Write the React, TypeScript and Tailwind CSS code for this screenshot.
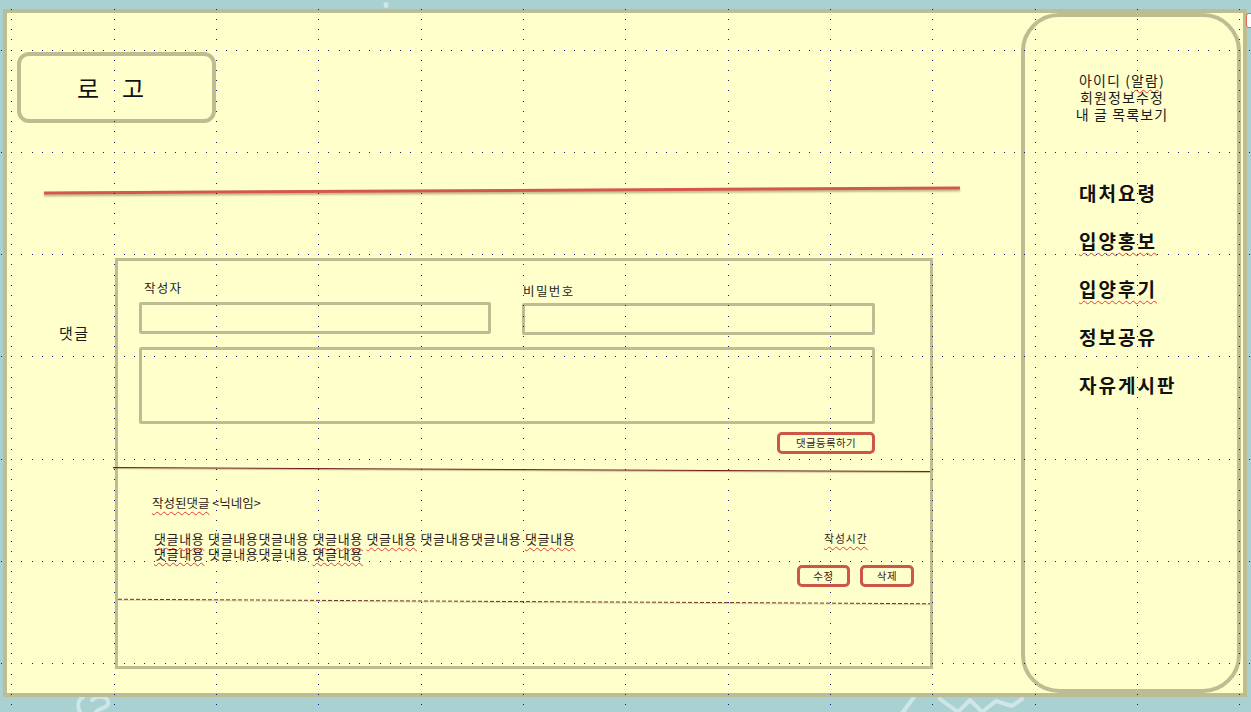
import React from "react";

function Grid() {
  const S = 102.33;
  const d = 10.233;
  const rects: React.ReactElement[] = [];
  for (let i = 0; i < 13; i++) {
    const x = Math.floor(11.7 + i * S);
    for (let j = -5; j < 66; j++) {
      const y = Math.floor(50 + j * d);
      if (y < 0 || y > 711) continue;
      rects.push(<rect key={`v${i}_${j}`} x={x} y={y} width={1} height={1} />);
    }
  }
  for (let i = 0; i < 7; i++) {
    const y = Math.floor(50 + i * S);
    for (let j = -2; j < 124; j++) {
      const x = Math.floor(11.7 + j * d);
      if (x < 0 || x > 1250) continue;
      if (j % 10 === 0) continue;
      rects.push(<rect key={`h${i}_${j}`} x={x} y={y} width={1} height={1} />);
    }
  }
  return (
    <svg
      className="absolute left-0 top-0 pointer-events-none"
      width={1251}
      height={712}
      fill="#15156b"
      shapeRendering="crispEdges"
    >
      {rects}
    </svg>
  );
}

function Squig({ children }: { children: React.ReactNode }) {
  return (
    <span className="underline decoration-wavy decoration-[#e23a3a] decoration-1 underline-offset-[3px]">
      {children}
    </span>
  );
}

export default function App() {
  return (
    <div className="relative w-[1251px] h-[712px] overflow-hidden bg-[#a9d1d1] font-['Noto_Sans_CJK_KR','Noto_Sans',sans-serif] text-[#1e1e1e]">
      <svg className="absolute left-0 top-0 pointer-events-none" width={1251} height={712} fill="none">
        <path d="M80 712 C77 706 78 700 83 697" stroke="#cfe6e6" strokeWidth={4} strokeLinecap="round" />
        <path d="M92 700 C98 694 110 697 108 704 C106 709 98 708 96 712" stroke="#cfe6e6" strokeWidth={4} strokeLinecap="round" />
        <path d="M903 712 L914 697" stroke="#cfe6e6" strokeWidth={4} strokeLinecap="round" />
        <path d="M940 699 L958 712 L970 700 L982 712 L996 701 L1012 706 L1022 699" stroke="#cfe6e6" strokeWidth={4} strokeLinecap="round" strokeLinejoin="round" />
        <ellipse cx={386} cy={5} rx={2.5} ry={3} fill="#cfe6e6" />
      </svg>

      <div className="relative ml-[3px] mt-[9px] w-[1244px] h-[688px] border-4 border-[#bdbd94] bg-[#ffffcc] flex">
        <main className="flex-1 flex flex-col">
          <div className="ml-[10px] mt-[39px] w-[199px] h-[71px] border-4 border-[#bdbd94] rounded-[12px] flex items-center justify-center pr-[12px] gap-[23px] text-[24px] leading-none text-[#111]">
            <span>로</span>
            <span>고</span>
          </div>

          <div className="ml-[37px] mt-[66px] w-[916px] h-[3px] bg-[#d35849] -rotate-[0.31deg] shadow-[0_2px_2px_rgba(110,100,60,0.45)]" />

          <div className="mt-[66px] flex">
            <div className="w-[108px] pl-[52px] pt-[65px] text-[15px] leading-[20px] tracking-[1.5px] text-[#1a1a1a]">댓글</div>

            <div className="w-[818px] h-[411px] border-[3px] border-[#bdbd94] flex flex-col pl-[21px] pr-[55px] pt-[19px]">
              <div className="flex gap-[31px]">
                <div className="w-[352px] flex flex-col">
                  <div className="pl-[5px] text-[12.5px] leading-[16px] tracking-[1.3px] text-[#1e1e1e]">작성자</div>
                  <div className="mt-[6px] h-[32px] border-[3px] border-[#bdbd94] rounded-[2px]" />
                </div>
                <div className="w-[353px] flex flex-col pt-[3px]">
                  <div className="pl-[1px] text-[12.5px] leading-[16px] tracking-[1.4px] text-[#1e1e1e]">비밀번호</div>
                  <div className="mt-[4px] h-[32px] border-[3px] border-[#bdbd94] rounded-[2px]" />
                </div>
              </div>

              <div className="mt-[12px] h-[77px] border-[3px] border-[#bdbd94] rounded-[2px]" />

              <div className="mt-[8px] self-end w-[98px] h-[22px] border-[3px] border-[#cd5646] rounded-[5px] flex items-center justify-center text-[10.5px] leading-none tracking-[0.3px] text-[#3a1d1d]">
                댓글등록하기
              </div>

              <div className="mt-[15px] -ml-[26px] -mr-[55px] h-px bg-[#6e1f1f] rotate-[0.28deg] shadow-[0_1px_1px_rgba(150,120,80,0.6)]" />

              <div className="mt-[25px] ml-[13px] text-[12.5px] leading-[16px] text-[#2e1a1a]">
                <Squig>작성된댓글</Squig> &lt;닉네임&gt;
              </div>

              <div className="mt-[20px] ml-[15px] flex items-start">
                <div className="w-[670px] text-[13px] leading-[15px] tracking-[0.65px] text-[#2e1a1a]">
                  <div>
                    <Squig>댓글내용</Squig> 댓글내용댓글내용 <Squig>댓글내용</Squig> <Squig>댓글내용</Squig> 댓글내용댓글내용 <Squig>댓글내용</Squig>
                  </div>
                  <div>
                    <Squig>댓글내용</Squig> 댓글내용댓글내용 <Squig>댓글내용</Squig>
                  </div>
                </div>
                <div className="text-[10.8px] leading-[15px] tracking-[1px] text-[#2e1a1a]">
                  <Squig>작성시간</Squig>
                </div>
              </div>

              <div className="mt-[4px] -mr-[39px] flex justify-end gap-[10px]">
                <div className="w-[53px] h-[22px] border-[3px] border-[#cd5646] rounded-[5px] flex items-center justify-center text-[10.5px] leading-none tracking-[0.5px] text-[#3a1d1d]">
                  수정
                </div>
                <div className="w-[54px] h-[22px] border-[3px] border-[#cd5646] rounded-[5px] flex items-center justify-center text-[10.5px] leading-none tracking-[0.5px] text-[#3a1d1d]">
                  삭제
                </div>
              </div>

              <div className="mt-[14px] -ml-[21px] -mr-[55px] h-px bg-[repeating-linear-gradient(90deg,#6b3326_0_4px,transparent_4px_6px)] rotate-[0.3deg] shadow-[0_1px_0_rgba(170,140,100,0.35)]" />
            </div>
          </div>
        </main>

        <aside className="w-[220px] mr-[2px] h-full border-4 border-[#bdbd94] rounded-[38px] flex flex-col">
          <div className="mt-[55px] ml-[22px] w-[150px] text-center text-[14px] leading-[17px] tracking-[1.1px] text-[#1a1a1a]">
            <div>
              아이디 (<Squig>알람</Squig>)
            </div>
            <div>회원정보수정</div>
            <div>내 글 목록보기</div>
          </div>
          <div className="mt-[46px] ml-[54px] flex flex-col text-[19px] font-bold leading-[48px] tracking-[2px] text-[#111]">
            <div>대처요령</div>
            <div>
              <Squig>입양홍보</Squig>
            </div>
            <div>
              <Squig>입양후기</Squig>
            </div>
            <div>정보공유</div>
            <div>자유게시판</div>
          </div>
        </aside>
      </div>

      <div className="absolute left-[1246px] top-[13px] w-[12px] h-[15px] rounded-[3px] border border-[#e0664f] bg-white" />

      <Grid />
    </div>
  );
}
